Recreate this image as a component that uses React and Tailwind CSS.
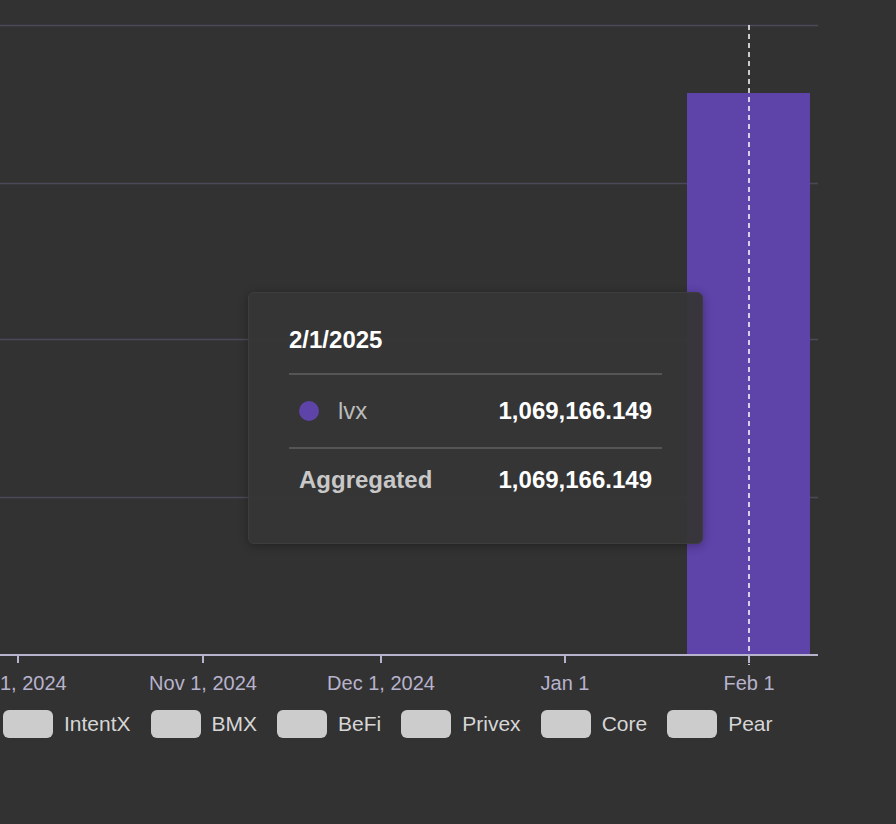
export default function App() {
  const ticks = [
    { x: 18, l: "1, 2024", a: "start" },
    { x: 203, l: "Nov 1, 2024" },
    { x: 381, l: "Dec 1, 2024" },
    { x: 565, l: "Jan 1" },
    { x: 749, l: "Feb 1" },
  ];
  const legend = ["IntentX", "BMX", "BeFi", "Privex", "Core", "Pear"];
  return (
    <div className="relative w-[896px] h-[824px] bg-[#323232] overflow-hidden" style={{ fontFamily: "Arimo, 'Liberation Sans', Arial, sans-serif" }}>
      <svg width="896" height="700" className="block">
        {[25, 183, 339, 497].map((y) => (
          <line key={y} x1="0" x2="818" y1={y + 0.5} y2={y + 0.5} stroke="#4b4858" strokeWidth="1.5" />
        ))}
        <rect x="687" y="93" width="123" height="562" fill="#5e43a9" />
        <line x1="749" x2="749" y1="25" y2="665" stroke="#fff" strokeWidth="1.5" strokeDasharray="5 4" />
        <line x1="0" x2="818" y1="655" y2="655" stroke="#b8b3cc" strokeWidth="2" />
        {ticks.map((t) => (
          <g key={t.x}>
            <line x1={t.x} x2={t.x} y1="655" y2="663" stroke="#b8b3cc" strokeWidth="2" />
            <text x={t.a ? 0 : t.x} y="690" textAnchor={t.a ? "start" : "middle"} fill="#b8b3cc" fontSize="20">{t.l}</text>
          </g>
        ))}
      </svg>
      <div className="absolute left-[3px] top-[708px] flex items-center">
        {legend.map((n) => (
          <div key={n} className="flex items-center mr-[20px]">
            <div className="w-[50px] h-[28px] rounded-[6px] bg-[#cccccc]" />
            <span className="ml-[11px] text-[21px] text-[#d6d6d6]">{n}</span>
          </div>
        ))}
      </div>
      <div className="absolute left-[248px] top-[292px] w-[455px] h-[252px] rounded-[6px] bg-[#363636]/95 border border-[#3d3d3d] shadow-[0_2px_10px_rgba(0,0,0,0.3)] px-[40px]">
        <div className="pt-[35px] text-[24px] font-bold text-white leading-none h-[82px] border-b-2 border-[#555] ">2/1/2025</div>
        <div className="flex items-center h-[74px] border-b-2 border-[#555] px-[10px]">
          <span className="w-[20px] h-[20px] rounded-full bg-[#5e43a9]" />
          <span className="ml-[19px] text-[24px] text-[#bbbbbb]">lvx</span>
          <span className="ml-auto text-[24px] font-bold text-white">1,069,166.149</span>
        </div>
        <div className="flex items-center h-[62px] px-[10px]">
          <span className="text-[24px] font-bold text-[#c8c8c8]">Aggregated</span>
          <span className="ml-auto text-[24px] font-bold text-white">1,069,166.149</span>
        </div>
      </div>
    </div>
  );
}
